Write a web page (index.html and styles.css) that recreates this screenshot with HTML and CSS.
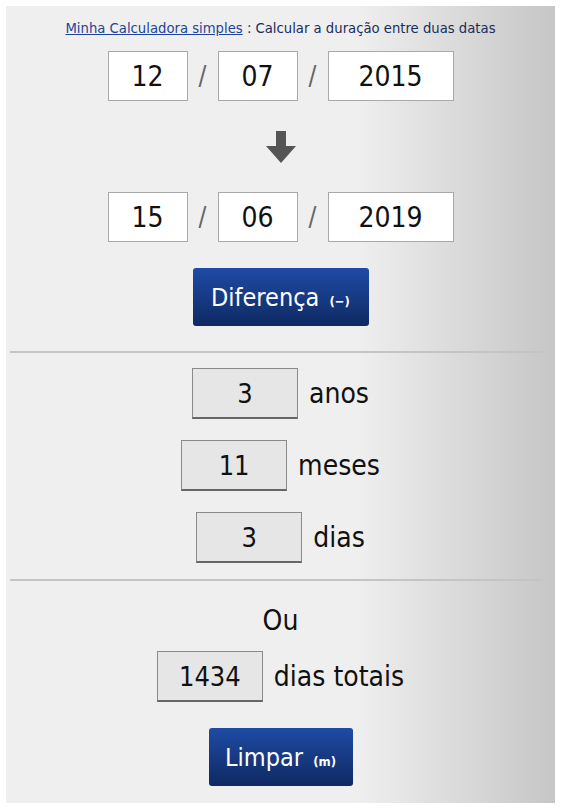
FILE: index.html
```html
<!DOCTYPE html>
<html lang="pt">
<head>
  <meta charset="UTF-8">
  <meta name="viewport" content="width=device-width, initial-scale=1.0">
  <title>Calcular a duração entre duas datas</title>
  <link rel="stylesheet" href="styles.css">
</head>
<body>
  <div class="panel">
    <p class="title"><a href="#">Minha Calculadora simples</a> : Calcular a duração entre duas datas</p>

    <div class="date-row">
      <input class="field" type="text" value="12">
      <span class="slash">/</span>
      <input class="field" type="text" value="07">
      <span class="slash">/</span>
      <input class="field year" type="text" value="2015">
    </div>

    <div class="arrow">
      <svg width="32" height="34" viewBox="0 0 32 34">
        <path d="M11 1h10v15h10L16 33 1 16h10z" fill="#555"/>
      </svg>
    </div>

    <div class="date-row">
      <input class="field" type="text" value="15">
      <span class="slash">/</span>
      <input class="field" type="text" value="06">
      <span class="slash">/</span>
      <input class="field year" type="text" value="2019">
    </div>

    <div class="actions">
      <button class="btn btn-diff">Diferença <small>(−)</small></button>
    </div>

    <hr class="sep">

    <div class="result-row">
      <span class="result">3</span>
      <span class="unit">anos</span>
    </div>
    <div class="result-row">
      <span class="result">11</span>
      <span class="unit">meses</span>
    </div>
    <div class="result-row">
      <span class="result">3</span>
      <span class="unit">dias</span>
    </div>

    <hr class="sep sep-tight">

    <p class="or">Ou</p>
    <div class="result-row total-row">
      <span class="result">1434</span>
      <span class="unit">dias totais</span>
    </div>

    <div class="actions">
      <button class="btn btn-clear">Limpar <small>(m)</small></button>
    </div>
  </div>
</body>
</html>
```

FILE: styles.css
```css
/* General */
body {
  margin: 0;
  padding: 6px;
  background: #fff;
  font-family: 'DejaVu Sans Condensed', 'DejaVu Sans', sans-serif;
  font-stretch: condensed;
  color: #111;
}

.panel {
  width: 549px;
  height: 797px;
  box-sizing: border-box;
  padding-top: 13px;
  background: linear-gradient(to right, #efefef 0%, #efefef 64%, #c6c6c6 100%);
  text-align: center;
}

.title {
  margin: 0 0 14px;
  font-size: 14.7px;
  line-height: 18px;
  color: #1a2c5c;
}

.title a {
  color: #1d449a;
}

/* Date inputs */
.date-row {
  display: flex;
  justify-content: center;
  align-items: center;
}

.field {
  width: 80px;
  height: 50px;
  box-sizing: border-box;
  border: 1px solid #a9a9a9;
  background: #fff;
  text-align: center;
  font-family: inherit;
  font-stretch: condensed;
  font-size: 28px;
  color: #111;
  padding: 0;
}

.field.year {
  width: 126px;
}

.slash {
  width: 30px;
  font-size: 26px;
  color: #666;
}

.arrow {
  height: 91px;
  display: flex;
  justify-content: center;
  align-items: center;
}

/* Buttons */
.actions {
  display: flex;
  justify-content: center;
  margin-top: 26px;
}

.btn {
  height: 58px;
  padding: 0;
  border: none;
  border-radius: 3px;
  background: linear-gradient(to bottom, #1e4ba5, #0f2962);
  color: #fff;
  font-family: inherit;
  font-stretch: condensed;
  font-size: 25px;
  white-space: nowrap;
  cursor: pointer;
}

.btn small {
  font-size: 13px;
  font-weight: bold;
  margin-left: 3px;
}

.btn-diff {
  width: 176px;
}

.btn-clear {
  width: 144px;
}

.sep {
  margin: 25px 12px 0 4px;
  border: none;
  height: 2px;
  background: #c4c4c4;
}

.sep-tight {
  margin-top: 16px;
}

/* Results */
.result-row {
  display: flex;
  justify-content: center;
  align-items: center;
  gap: 11px;
  margin-top: 15px;
}

.result-row + .result-row {
  margin-top: 21px;
}

.total-row {
  margin-top: 13px;
}

.result {
  width: 106px;
  height: 51px;
  box-sizing: border-box;
  display: flex;
  justify-content: center;
  align-items: center;
  background: #e6e6e6;
  border: 1px solid #8a8a8a;
  border-bottom: 2px solid #666;
  font-size: 27px;
}

.unit {
  font-size: 28px;
}

.or {
  margin: 23px 0 0;
  font-size: 28px;
  line-height: 34px;
}
```
